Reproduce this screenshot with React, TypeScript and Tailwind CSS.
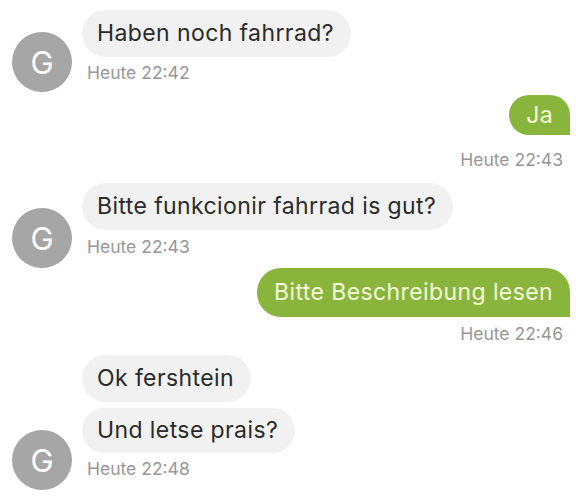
import React from 'react';

type Msg = { text: string; h?: string; mt?: string };

const Avatar: React.FC = () => (
  <div className="w-[60px] h-[60px] shrink-0 rounded-full bg-[#a6a6a6] flex items-center justify-center text-white text-[31px] leading-none">
    G
  </div>
);

const Incoming: React.FC<{ msgs: Msg[]; time: string; mt: string; tsMt: string; pb: string }> = ({ msgs, time, mt, tsMt, pb }) => (
  <div className={`flex items-end gap-[10px] ${mt}`}>
    <Avatar />
    <div className={`flex flex-col items-start ${pb}`}>
      {msgs.map((m, i) => (
        <div
          key={i}
          className={`${m.h ?? 'h-[47px]'} ${m.mt ?? ''} flex items-center pl-[15px] pr-[17px] rounded-[24px] bg-[#f1f1f1] text-[#2a2a2a] text-[23px] tracking-[0.4px]`}
        >
          {m.text}
        </div>
      ))}
      <div className={`${tsMt} pl-[5px] leading-[20px] text-[17.5px] text-[#979797]`}>{time}</div>
    </div>
  </div>
);

const Outgoing: React.FC<{ text: string; time: string; h: string; mt: string; tsMt: string }> = ({ text, time, h, mt, tsMt }) => (
  <div className={`flex flex-col items-end ${mt}`}>
    <div className={`${h} flex items-center px-[17px] rounded-[24px] rounded-br-none bg-[#89b53d] text-[#f4f9dc] text-[23px] tracking-[0.4px]`}>
      {text}
    </div>
    <div className={`${tsMt} pr-[7px] leading-[20px] text-[17.5px] text-[#979797]`}>{time}</div>
  </div>
);

export default function App() {
  return (
    <div className="w-[582px] h-[504px] bg-white overflow-hidden font-['Inter','Liberation_Sans',sans-serif]">
      <div className="flex flex-col pl-[12px] pr-[12px] pt-[10px]">
        <Incoming msgs={[{ text: 'Haben noch fahrrad?' }]} time="Heute 22:42" mt="" tsMt="mt-[6px]" pb="pb-[9px]" />
        <Outgoing text="Ja" time="Heute 22:43" h="h-[40px]" mt="mt-[3px]" tsMt="mt-[15px]" />
        <Incoming msgs={[{ text: 'Bitte funkcionir fahrrad is gut?' }]} time="Heute 22:43" mt="mt-[13px]" tsMt="mt-[7px]" pb="pb-[11px]" />
        <Outgoing text="Bitte Beschreibung lesen" time="Heute 22:46" h="h-[49px]" mt="" tsMt="mt-[7px]" />
        <Incoming
          msgs={[{ text: 'Ok fershtein' }, { text: 'Und letse prais?', h: 'h-[45px]', mt: 'mt-[6px]' }]}
          time="Heute 22:48"
          mt="mt-[11px]"
          tsMt="mt-[6px]"
          pb="pb-[11px]"
        />
      </div>
    </div>
  );
}
